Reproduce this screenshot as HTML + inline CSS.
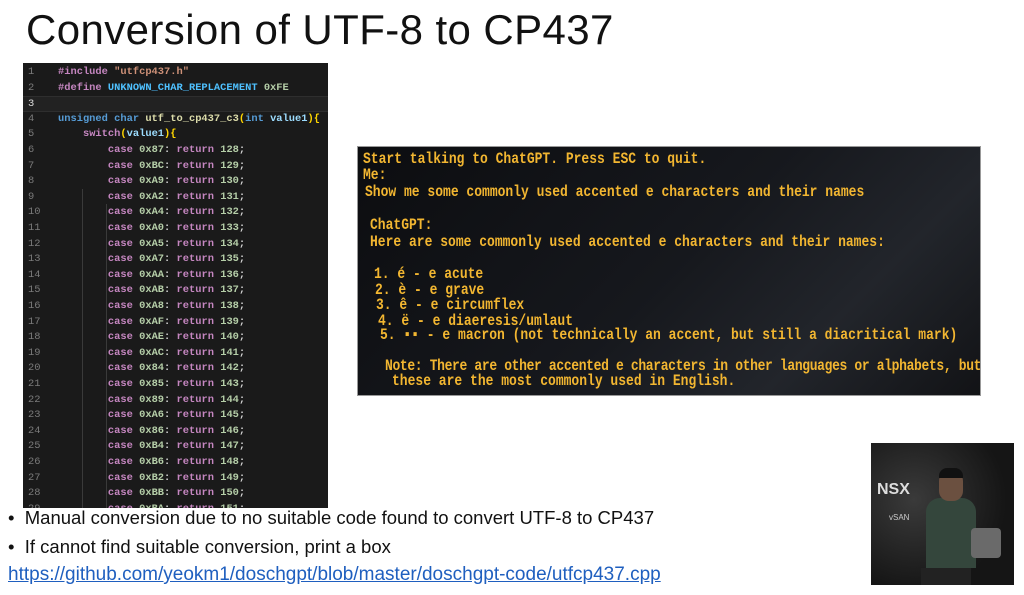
<!DOCTYPE html>
<html><head><style>
*{margin:0;padding:0;box-sizing:border-box}
body{width:1024px;height:595px;background:#fff;position:relative;overflow:hidden;font-family:"Liberation Sans",sans-serif}
.title{position:absolute;left:26px;top:6px;font-size:42px;color:#111;letter-spacing:0.4px}
.code{position:absolute;left:23px;top:63px;width:305px;height:445px;background:#1a1a1a;overflow:hidden;font-family:"Liberation Mono",monospace;font-size:10.4px;font-weight:bold}
.code .l{position:absolute;left:0;height:15.6px;line-height:15.6px;white-space:pre;width:305px}
.code .n{position:absolute;left:5px;color:#7a7a7a;font-weight:normal}
.code .t{position:absolute;left:35px;color:#d4d4d4}
.hl{background:#222;border-top:1px solid #2e2e2e;border-bottom:1px solid #2e2e2e}
.k{color:#c586c0}.b{color:#569cd6}.f{color:#dcdcaa}.s{color:#ce9178}.g{color:#b5cea8}.m{color:#4fc1ff}.y{color:#ffd700}.v{color:#9cdcfe}
.guide1{position:absolute;left:59px;top:126px;width:1px;height:400px;background:#3a3a3a}
.guide2{position:absolute;left:83px;top:141px;width:1px;height:400px;background:#3a3a3a}
.term{position:absolute;left:357px;top:146px;width:624px;height:250px;background:linear-gradient(135deg,#0c0d10,#16181d 50%,#22252b 75%,#121316);border:1px solid #999;overflow:hidden}
.term div{position:absolute;white-space:pre;font-family:"Liberation Mono",monospace;font-weight:bold;font-size:13px;color:#f2b631;line-height:14px;transform:scaleY(1.2);transform-origin:left top}
.bul{position:absolute;left:8px;font-size:18.5px;color:#111;white-space:pre}
.link{position:absolute;left:8px;top:564px;font-size:19px;color:#1f5fbf;text-decoration:underline;white-space:pre}
.cam{position:absolute;left:871px;top:443px;width:143px;height:142px;background:radial-gradient(circle at 30% 40%,#3a3a3a,#151515 70%);overflow:hidden}
</style></head><body>
<div class="title">Conversion of UTF-8 to CP437</div>
<div class="code">
<div class="guide1"></div><div class="guide2"></div>
<div class="l" style="top:2px"><span class="n">1</span><span class="t"><span class="k">#include</span> <span class="s">"utfcp437.h"</span></span></div>
<div class="l" style="top:17.6px"><span class="n">2</span><span class="t"><span class="k">#define</span> <span class="m">UNKNOWN_CHAR_REPLACEMENT</span> <span class="g">0xFE</span></span></div>
<div class="l hl" style="top:33.2px"><span class="n" style="color:#ddd">3</span></div>
<div class="l" style="top:48.8px"><span class="n">4</span><span class="t"><span class="b">unsigned char</span> <span class="f">utf_to_cp437_c3</span><span class="y">(</span><span class="b">int</span> <span class="v">value1</span><span class="y">){</span></span></div>
<div class="l" style="top:64.4px"><span class="n">5</span><span class="t">    <span class="k">switch</span><span class="y">(</span><span class="v">value1</span><span class="y">){</span></span></div>
<div class="l" style="top:80.0px"><span class="n">6</span><span class="t">        <span class="k">case</span> <span class="g">0x87</span>: <span class="k">return</span> <span class="g">128</span>;</span></div>
<div class="l" style="top:95.6px"><span class="n">7</span><span class="t">        <span class="k">case</span> <span class="g">0xBC</span>: <span class="k">return</span> <span class="g">129</span>;</span></div>
<div class="l" style="top:111.2px"><span class="n">8</span><span class="t">        <span class="k">case</span> <span class="g">0xA9</span>: <span class="k">return</span> <span class="g">130</span>;</span></div>
<div class="l" style="top:126.8px"><span class="n">9</span><span class="t">        <span class="k">case</span> <span class="g">0xA2</span>: <span class="k">return</span> <span class="g">131</span>;</span></div>
<div class="l" style="top:142.4px"><span class="n">10</span><span class="t">        <span class="k">case</span> <span class="g">0xA4</span>: <span class="k">return</span> <span class="g">132</span>;</span></div>
<div class="l" style="top:158.0px"><span class="n">11</span><span class="t">        <span class="k">case</span> <span class="g">0xA0</span>: <span class="k">return</span> <span class="g">133</span>;</span></div>
<div class="l" style="top:173.6px"><span class="n">12</span><span class="t">        <span class="k">case</span> <span class="g">0xA5</span>: <span class="k">return</span> <span class="g">134</span>;</span></div>
<div class="l" style="top:189.2px"><span class="n">13</span><span class="t">        <span class="k">case</span> <span class="g">0xA7</span>: <span class="k">return</span> <span class="g">135</span>;</span></div>
<div class="l" style="top:204.8px"><span class="n">14</span><span class="t">        <span class="k">case</span> <span class="g">0xAA</span>: <span class="k">return</span> <span class="g">136</span>;</span></div>
<div class="l" style="top:220.4px"><span class="n">15</span><span class="t">        <span class="k">case</span> <span class="g">0xAB</span>: <span class="k">return</span> <span class="g">137</span>;</span></div>
<div class="l" style="top:236.0px"><span class="n">16</span><span class="t">        <span class="k">case</span> <span class="g">0xA8</span>: <span class="k">return</span> <span class="g">138</span>;</span></div>
<div class="l" style="top:251.6px"><span class="n">17</span><span class="t">        <span class="k">case</span> <span class="g">0xAF</span>: <span class="k">return</span> <span class="g">139</span>;</span></div>
<div class="l" style="top:267.2px"><span class="n">18</span><span class="t">        <span class="k">case</span> <span class="g">0xAE</span>: <span class="k">return</span> <span class="g">140</span>;</span></div>
<div class="l" style="top:282.8px"><span class="n">19</span><span class="t">        <span class="k">case</span> <span class="g">0xAC</span>: <span class="k">return</span> <span class="g">141</span>;</span></div>
<div class="l" style="top:298.4px"><span class="n">20</span><span class="t">        <span class="k">case</span> <span class="g">0x84</span>: <span class="k">return</span> <span class="g">142</span>;</span></div>
<div class="l" style="top:314.0px"><span class="n">21</span><span class="t">        <span class="k">case</span> <span class="g">0x85</span>: <span class="k">return</span> <span class="g">143</span>;</span></div>
<div class="l" style="top:329.6px"><span class="n">22</span><span class="t">        <span class="k">case</span> <span class="g">0x89</span>: <span class="k">return</span> <span class="g">144</span>;</span></div>
<div class="l" style="top:345.2px"><span class="n">23</span><span class="t">        <span class="k">case</span> <span class="g">0xA6</span>: <span class="k">return</span> <span class="g">145</span>;</span></div>
<div class="l" style="top:360.8px"><span class="n">24</span><span class="t">        <span class="k">case</span> <span class="g">0x86</span>: <span class="k">return</span> <span class="g">146</span>;</span></div>
<div class="l" style="top:376.4px"><span class="n">25</span><span class="t">        <span class="k">case</span> <span class="g">0xB4</span>: <span class="k">return</span> <span class="g">147</span>;</span></div>
<div class="l" style="top:392.0px"><span class="n">26</span><span class="t">        <span class="k">case</span> <span class="g">0xB6</span>: <span class="k">return</span> <span class="g">148</span>;</span></div>
<div class="l" style="top:407.6px"><span class="n">27</span><span class="t">        <span class="k">case</span> <span class="g">0xB2</span>: <span class="k">return</span> <span class="g">149</span>;</span></div>
<div class="l" style="top:423.2px"><span class="n">28</span><span class="t">        <span class="k">case</span> <span class="g">0xBB</span>: <span class="k">return</span> <span class="g">150</span>;</span></div>
<div class="l" style="top:438.8px"><span class="n">29</span><span class="t">        <span class="k">case</span> <span class="g">0xBA</span>: <span class="k">return</span> <span class="g">151</span>;</span></div>
</div>
<div class="term">
<div style="left:5px;top:4px">Start talking to ChatGPT. Press ESC to quit.</div>
<div style="left:5px;top:20px">Me:</div>
<div style="left:7px;top:37px">Show me some commonly used accented e characters and their names</div>
<div style="left:12px;top:70px">ChatGPT:</div>
<div style="left:12px;top:87px">Here are some commonly used accented e characters and their names:</div>
<div style="left:16px;top:119px">1. é - e acute</div>
<div style="left:17px;top:135px">2. è - e grave</div>
<div style="left:18px;top:150px">3. ê - e circumflex</div>
<div style="left:20px;top:166px">4. ë - e diaeresis/umlaut</div>
<div style="left:22px;top:180px">5. ▪▪ - e macron (not technically an accent, but still a diacritical mark)</div>
<div style="left:27px;top:211px;letter-spacing:-0.35px">Note: There are other accented e characters in other languages or alphabets, but</div>
<div style="left:34px;top:226px">these are the most commonly used in English.</div>
</div>
<div class="bul" style="top:507px">•  Manual conversion due to no suitable code found to convert UTF-8 to CP437</div>
<div class="bul" style="top:536px">•  If cannot find suitable conversion, print a box</div>
<div class="link">https://github.com/yeokm1/doschgpt/blob/master/doschgpt-code/utfcp437.cpp</div>
<div class="cam">
<div style="position:absolute;left:6px;top:38px;color:#ddd;font-weight:bold;font-size:16px">NSX</div>
<div style="position:absolute;left:18px;top:70px;color:#ccc;font-size:8px">vSAN</div>
<div style="position:absolute;left:55px;top:55px;width:50px;height:70px;background:#34463c;border-radius:14px 14px 0 0"></div>
<div style="position:absolute;left:68px;top:28px;width:24px;height:30px;background:#6b5040;border-radius:10px"></div>
<div style="position:absolute;left:68px;top:25px;width:24px;height:10px;background:#111;border-radius:8px 8px 0 0"></div>
<div style="position:absolute;left:100px;top:85px;width:30px;height:30px;background:#6a6a6a;border-radius:4px"></div>
<div style="position:absolute;left:50px;top:125px;width:50px;height:17px;background:#222"></div>
</div>
</body></html>
